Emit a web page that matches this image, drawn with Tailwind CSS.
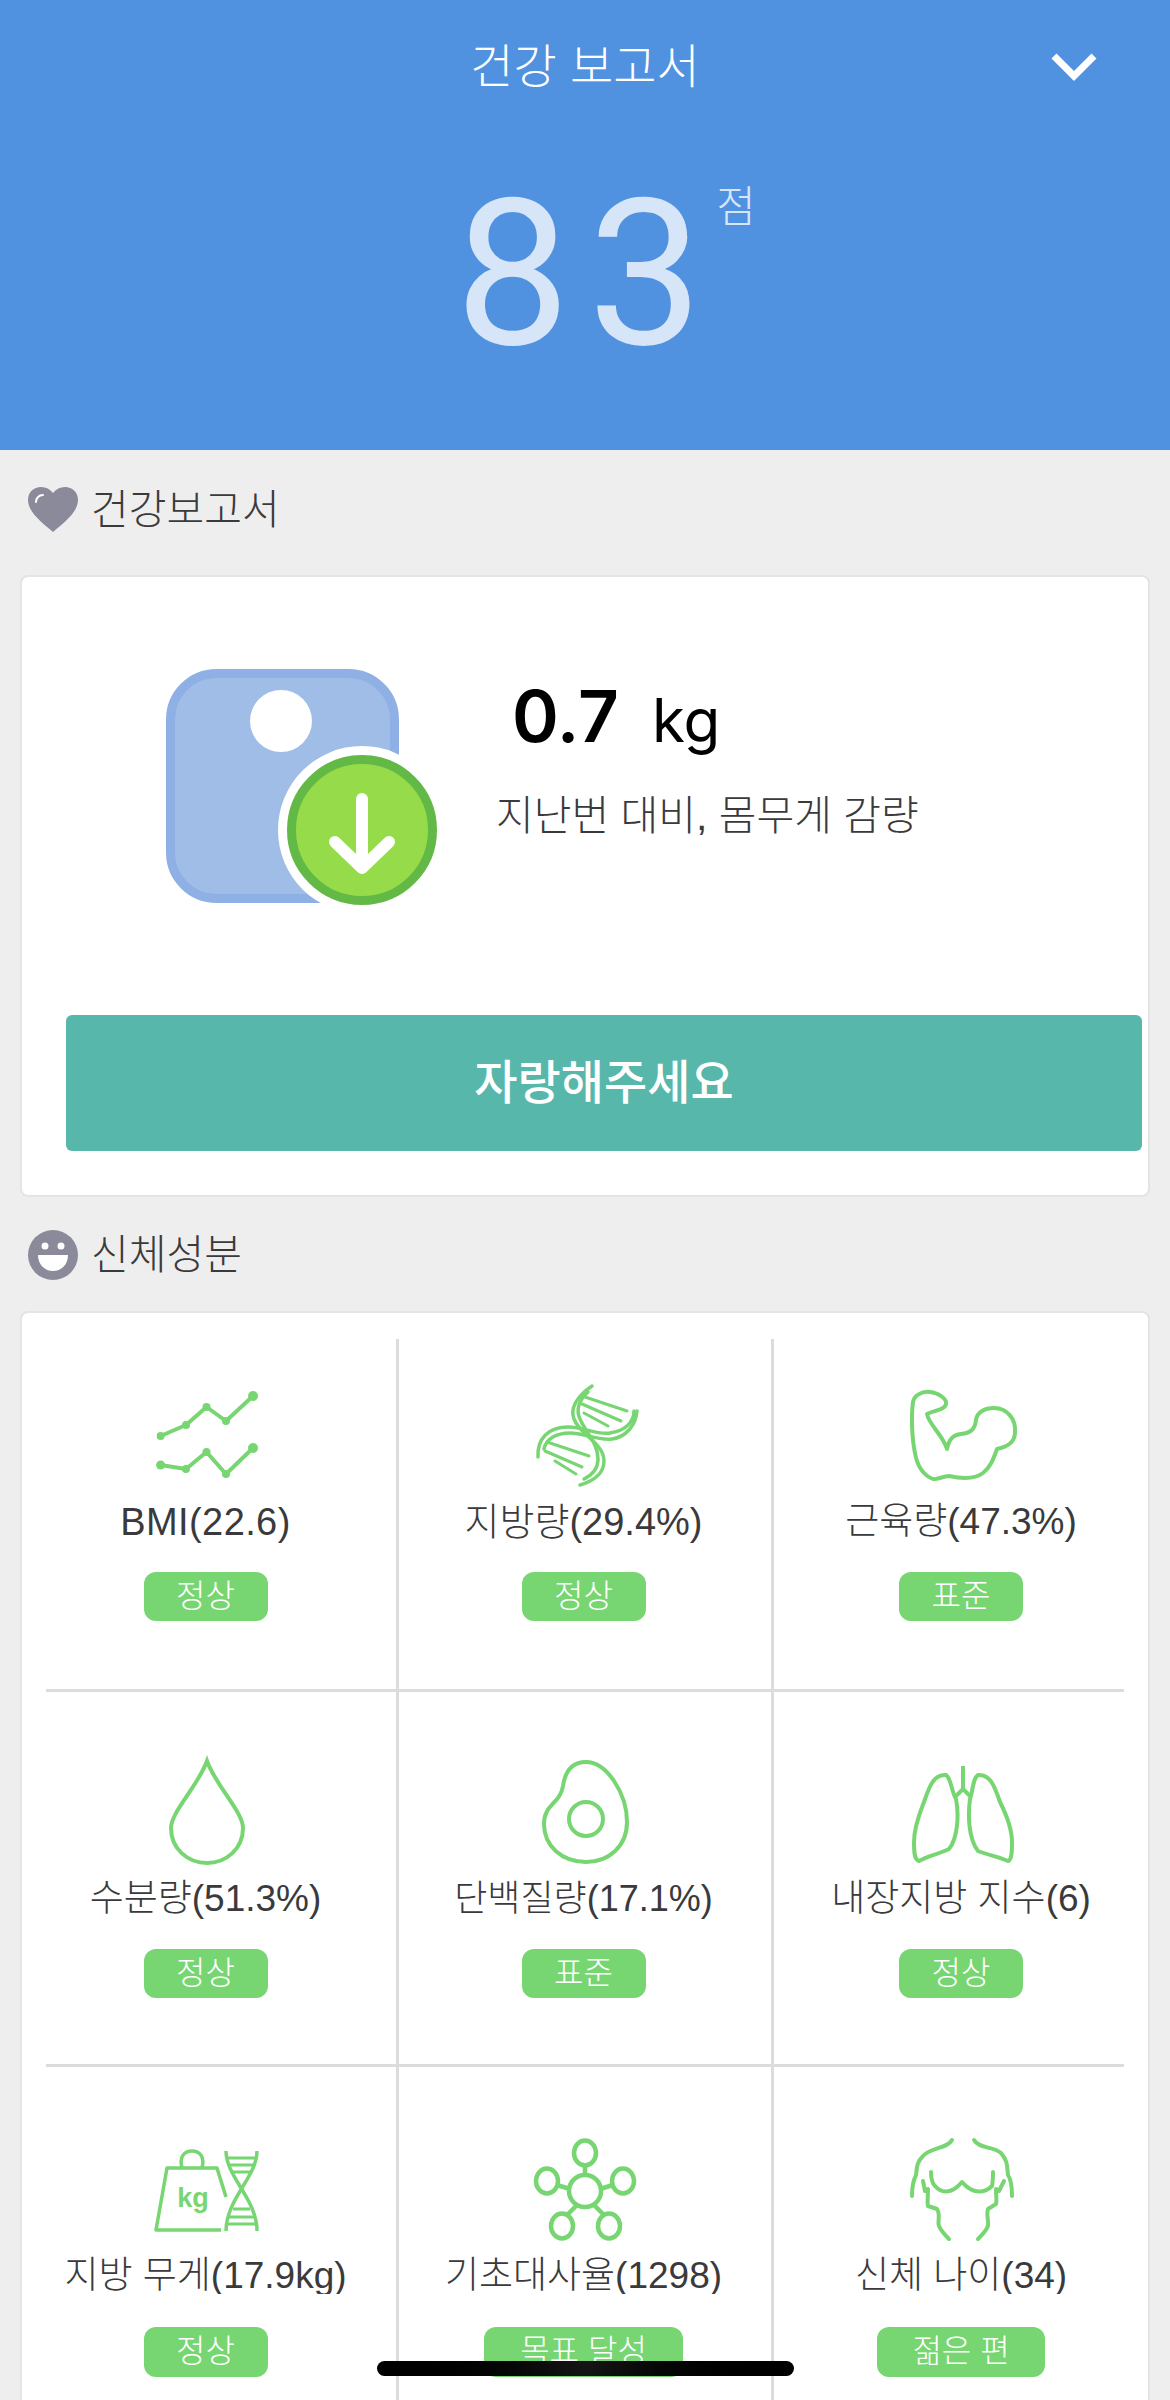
<!DOCTYPE html>
<html lang="ko">
<head>
  <meta charset="UTF-8" />
  <title>건강 보고서</title>
  <script src="https://cdn.jsdelivr.net/npm/@tailwindcss/browser@4"></script>
</head>
<body class="relative h-[2400px] overflow-hidden bg-[#eeeeee] font-['Liberation_Sans','Noto_Sans_CJK_KR',sans-serif] text-[#3a3a3c]">

  <!-- Score header -->
  <header class="relative h-[450px] bg-[#5091e0] flex flex-col items-center text-white">
    <h1 class="mt-[37px] h-[60px] leading-[60px] text-[47px] font-light">건강 보고서</h1>
    <svg class="absolute left-[1046px] top-[46px]" width="56" height="40" viewBox="0 0 56 40" fill="none" stroke="#fff" stroke-width="7"><path d="M8 10 L28 30 L48 10" /></svg>
    <div class="relative mt-[73px] ml-[6px] h-[210px] leading-[210px] text-[204px] font-['Roboto',sans-serif] font-normal tracking-[18px] text-[#d6e6f8]">
      83
      <span class="absolute left-[261px] top-[8px] h-[50px] leading-[50px] text-[43px] tracking-normal font-['Noto_Sans_CJK_KR',sans-serif] font-light">점</span>
    </div>
  </header>

  <!-- 건강보고서 -->
  <div class="h-[125px] flex items-center pl-[28px] pb-[6px] gap-[13px]">
    <svg width="50" height="46" viewBox="0 0 50 46">
      <path fill="#8a8a9a" d="M25 45 C16 37 0 26 0 13 C0 5 6 0 13 0 C18 0 22 2 25 6 C28 2 32 0 37 0 C44 0 50 5 50 13 C50 26 34 37 25 45Z" />
      <path fill="none" stroke="#fff" stroke-width="2" stroke-linecap="round" d="M8 15 C8 11 11 8 15 8" />
    </svg>
    <h2 class="text-[41px] leading-[50px] font-light">건강보고서</h2>
  </div>

  <section class="mx-[20px] h-[622px] rounded-[8px] border-[2px] border-[#e4e4e4] bg-white">
    <div class="flex h-[438px]">
      <svg class="ml-[144px] mt-[92px] shrink-0" width="290" height="250" viewBox="0 0 290 250">
        <rect x="4.5" y="4.5" width="224" height="225" rx="46" fill="#a0bde8" stroke="#8fb0e5" stroke-width="9" />
        <circle cx="115" cy="52" r="31" fill="#fff" />
        <circle cx="196" cy="161" r="84" fill="#fff" />
        <circle cx="196" cy="161" r="70.5" fill="#96dc4a" stroke="#63b946" stroke-width="9" />
        <path d="M196 130 V199 M169 173 L196 199 L223 173" fill="none" stroke="#fff" stroke-width="12" stroke-linecap="round" stroke-linejoin="round" />
      </svg>
      <div class="ml-[40px] mt-[94px]">
        <div class="flex items-baseline h-[90px] pl-[16px]">
          <span class="font-['Inter',sans-serif] text-[71px] font-semibold leading-[90px] text-black">0.7</span>
          <span class="ml-[33px] font-['Inter',sans-serif] text-[60px] leading-[90px] text-black">kg</span>
        </div>
        <p class="mt-[30px] text-[41px] leading-[50px] whitespace-nowrap font-light">지난번 대비, 몸무게 감량</p>
      </div>
    </div>
    <button class="ml-[44px] w-[1076px] h-[136px] rounded-[6px] bg-[#57b7aa] text-white text-[47px] font-medium">자랑해주세요</button>
  </section>

  <!-- 신체성분 -->
  <div class="h-[114px] flex items-center pl-[28px] pt-[2px] gap-[13px]">
    <svg width="50" height="50" viewBox="0 0 50 50">
      <circle cx="25" cy="25" r="25" fill="#8a8a9a" />
      <circle cx="17" cy="16" r="3.5" fill="#fff" />
      <circle cx="33" cy="16" r="3.5" fill="#fff" />
      <path fill="#fff" d="M10 25 H40 C40 35 33 41 25 41 C17 41 10 35 10 25Z" />
    </svg>
    <h2 class="text-[41px] leading-[50px] font-light">신체성분</h2>
  </div>

  <section class="mx-[20px] rounded-[8px] border-[2px] border-[#e4e4e4] bg-white h-[1200px] pt-[26px]">

    <!-- row 1 -->
    <div class="grid grid-cols-[377px_375px_1fr] h-[350px]">
      <div class="flex flex-col items-center pt-[38px] pr-[7px] border-r-[3px] border-[#dcdcdc]">
        <svg width="120" height="120" viewBox="0 0 120 120" fill="none" stroke="#77d672" stroke-width="4" stroke-linejoin="round">
          <path d="M14.6 59 L40 48 L60.5 30 L80 44 L107 19" />
          <path d="M14.6 88 L40 92 L60.5 75 L80 97 L107 71" />
          <g fill="#77d672" stroke="none">
            <circle cx="14.6" cy="59" r="4" /><circle cx="40" cy="48" r="4" /><circle cx="60.5" cy="30" r="4" /><circle cx="80" cy="44" r="4" /><circle cx="107" cy="19" r="5" />
            <circle cx="14.6" cy="88" r="4.5" /><circle cx="40" cy="92" r="4" /><circle cx="60.5" cy="75" r="4" /><circle cx="80" cy="97" r="4" /><circle cx="107" cy="71" r="5" />
          </g>
        </svg>
        <div class="h-[50px] leading-[50px] text-[38px] tracking-[0.4px] font-light whitespace-nowrap">BMI(22.6)</div>
        <div class="mt-[25px] w-[124px] h-[49px] rounded-[12px] bg-[#77d672] text-white text-[32px] font-light leading-[48px] text-center">정상</div>
      </div>
      <div class="flex flex-col items-center pt-[38px] pr-[3px] border-r-[3px] border-[#dcdcdc]">
        <svg width="120" height="120" viewBox="0 0 120 120" fill="none" stroke="#77d672" stroke-width="3.5" stroke-linecap="round">
          <path d="M68 9 C52 20 46 32 50 42 C56 58 80 66 80 84 C80 96 70 104 56 108" />
          <path d="M64 15 C54 24 52 34 56 42 C62 56 74 66 74 82 C74 92 68 98 60 102" />
          <path d="M14 80 C13 62 24 50 44 50 C60 50 72 58 86 56 C100 54 110 46 110 34" />
          <path d="M20 72 C22 62 32 56 46 56 C60 56 74 64 88 62 C102 60 112 48 113 34" />
          <path d="M58 19 L103 34 M58 27 L97 44 M60 36 L84 49 M23 65 L65 79 M21 74 L58 90 M31 84 L52 97" stroke-width="3" />
        </svg>
        <div class="h-[50px] leading-[50px] text-[38px] font-light whitespace-nowrap">지방량(29.4%)</div>
        <div class="mt-[25px] w-[124px] h-[49px] rounded-[12px] bg-[#77d672] text-white text-[32px] font-light leading-[48px] text-center">정상</div>
      </div>
      <div class="flex flex-col items-center pt-[38px]">
        <svg width="120" height="120" viewBox="0 0 120 120" fill="none" stroke="#77d672" stroke-width="4" stroke-linejoin="round">
          <path d="M29 15 C38 16 46 22 45 27 C44 33 34 33 26 37 C28 48 42 58 46 72 C48 62 52 58 60 57 C70 56 74 52 75 43 C76 35 84 31 93 31 C106 31 115 42 114 55 C114 66 106 70 96 72 C93 80 90 90 82 96 C74 102 62 102 48 99 C42 99 36 103 32 102 C22 98 16 88 14 76 C11 62 10 40 12 25 C13 19 20 14 29 15Z" />
        </svg>
        <div class="h-[50px] leading-[50px] text-[37px] font-light whitespace-nowrap">근육량(47.3%)</div>
        <div class="mt-[25px] w-[124px] h-[49px] rounded-[12px] bg-[#77d672] text-white text-[32px] font-light leading-[48px] text-center">표준</div>
      </div>
    </div>
    <div class="mx-[24px] h-[3px] bg-[#dcdcdc]"></div>

    <!-- row 2 -->
    <div class="grid grid-cols-[377px_375px_1fr] h-[372px]">
      <div class="flex flex-col items-center pt-[62px] pr-[7px] border-r-[3px] border-[#dcdcdc]">
        <svg width="120" height="120" viewBox="0 0 120 120" fill="none" stroke="#77d672" stroke-width="4">
          <path d="M61 7 C52 32 25 58 25 74 C25 95 42 109 61 109 C80 109 97 95 97 74 C97 58 70 32 61 7Z" />
        </svg>
        <div class="h-[50px] leading-[50px] text-[37px] font-light whitespace-nowrap">수분량(51.3%)</div>
        <div class="mt-[25px] w-[124px] h-[49px] rounded-[12px] bg-[#77d672] text-white text-[32px] font-light leading-[48px] text-center">정상</div>
      </div>
      <div class="flex flex-col items-center pt-[62px] pr-[3px] border-r-[3px] border-[#dcdcdc]">
        <svg width="120" height="120" viewBox="0 0 120 120" fill="none" stroke="#77d672" stroke-width="4">
          <path d="M62 8 C83 8 103 40 103 68 C103 92 85 108 62 108 C38 108 20 92 20 70 C20 50 36 50 39 32 C41 18 48 8 62 8Z" />
          <circle cx="62" cy="65" r="17" />
        </svg>
        <div class="h-[50px] leading-[50px] text-[36px] font-light whitespace-nowrap">단백질량(17.1%)</div>
        <div class="mt-[25px] w-[124px] h-[49px] rounded-[12px] bg-[#77d672] text-white text-[32px] font-light leading-[48px] text-center">표준</div>
      </div>
      <div class="flex flex-col items-center pt-[62px]">
        <svg width="120" height="120" viewBox="0 0 120 120" fill="none" stroke="#77d672" stroke-width="4" stroke-linejoin="round">
          <path d="M62 12 V35 M55 42 L62 35 L69 42" />
          <path d="M45 21 C50 24 50 36 55 45 C58 60 57 84 48 95 C38 100 26 102 18 107 C13 106 13 96 13 88 C13 72 20 56 23 48 C28 34 32 20 45 21Z" />
          <path d="M77 21 C72 24 72 36 69 45 C67 60 67 84 77 97 C87 101 99 103 107 107 C111 106 111 96 111 88 C111 72 103 56 99 48 C94 34 90 20 77 21Z" />
        </svg>
        <div class="h-[50px] leading-[50px] text-[37px] font-light whitespace-nowrap">내장지방 지수(6)</div>
        <div class="mt-[25px] w-[124px] h-[49px] rounded-[12px] bg-[#77d672] text-white text-[32px] font-light leading-[48px] text-center">정상</div>
      </div>
    </div>
    <div class="mx-[24px] h-[3px] bg-[#dcdcdc]"></div>

    <!-- row 3 -->
    <div class="grid grid-cols-[377px_375px_1fr] h-[400px]">
      <div class="flex flex-col items-center pt-[64px] pr-[7px] border-r-[3px] border-[#dcdcdc]">
        <svg width="120" height="120" viewBox="0 0 120 120" fill="none" stroke="#77d672" stroke-width="3.5" stroke-linejoin="round">
          <path d="M80 66 L71 37 H21 L10 99 H75" />
          <path d="M36 37 C33 26 38 20 46 20 C54 20 59 26 56 37" />
          <text x="47" y="76" text-anchor="middle" font-size="27" font-weight="700" fill="#77d672" stroke="none" font-family="Liberation Sans">kg</text>
          <path d="M80 20 C80 46 111 68 111 100 M111 20 C111 46 80 68 80 100" />
          <path d="M81 27 H110 M83 34 H108 M87 41 H104 M87 78 H104 M83 86 H108 M81 93 H110" stroke-width="3" />
        </svg>
        <div class="h-[43px] overflow-hidden leading-[50px] text-[37px] font-light whitespace-nowrap">지방 무게(17.9kg)</div>
        <div class="mt-[33px] w-[124px] h-[50px] rounded-[12px] bg-[#77d672] text-white text-[32px] font-light leading-[48px] text-center">정상</div>
      </div>
      <div class="flex flex-col items-center pt-[64px] pr-[3px] border-r-[3px] border-[#dcdcdc]">
        <svg width="120" height="120" viewBox="0 0 120 120" fill="none" stroke="#77d672" stroke-width="4.5">
          <circle cx="61" cy="60" r="16" />
          <ellipse cx="61" cy="22" rx="11" ry="12.5" />
          <ellipse cx="23" cy="50" rx="11" ry="12.5" />
          <ellipse cx="99" cy="50" rx="11" ry="12.5" />
          <ellipse cx="38" cy="95" rx="11" ry="12.5" />
          <ellipse cx="85" cy="95" rx="11" ry="12.5" />
          <path d="M61 34 V44 M33 54 L46 58 M89 54 L76 58 M43 84 L53 74 M80 84 L70 74" />
        </svg>
        <div class="h-[43px] overflow-hidden leading-[50px] text-[37px] font-light whitespace-nowrap">기초대사율(1298)</div>
        <div class="mt-[33px] w-[199px] h-[50px] rounded-[12px] bg-[#77d672] text-white text-[32px] font-light leading-[48px] text-center">목표 달성</div>
      </div>
      <div class="flex flex-col items-center pt-[64px]">
        <svg width="120" height="120" viewBox="0 0 120 120" fill="none" stroke="#77d672" stroke-width="4" stroke-linecap="round" stroke-linejoin="round">
          <path d="M51 9 C46 18 30 16 22 25 C15 32 16 38 15 44 C12 50 11 58 11 65" />
          <path d="M73 9 C78 18 92 15 100 22 C107 30 106 36 107 44 C111 50 111 58 111 65" />
          <path d="M30 41 C30 48 31 52 34 55 C40 62 50 64 61 51 C72 64 84 62 91 55 C92 50 92 46 92 41" />
          <path d="M22 50 L24 60 L27 58 C27 66 26 72 27 75 L36 78 C40 84 36 90 38 95 C40 100 44 104 48 108" />
          <path d="M103 50 L98 60 L95 58 C95 66 96 70 95 73 L87 78 C85 84 88 90 87 95 C85 100 81 104 77 108" />
        </svg>
        <div class="h-[43px] overflow-hidden leading-[50px] text-[37px] font-light whitespace-nowrap">신체 나이(34)</div>
        <div class="mt-[33px] w-[168px] h-[50px] rounded-[12px] bg-[#77d672] text-white text-[32px] font-light leading-[48px] text-center">젊은 편</div>
      </div>
    </div>
  </section>

  <!-- home indicator -->
  <div class="absolute left-[377px] top-[2361px] w-[417px] h-[15px] rounded-full bg-gradient-to-r from-black via-[#151515] to-black"></div>
</body>
</html>
